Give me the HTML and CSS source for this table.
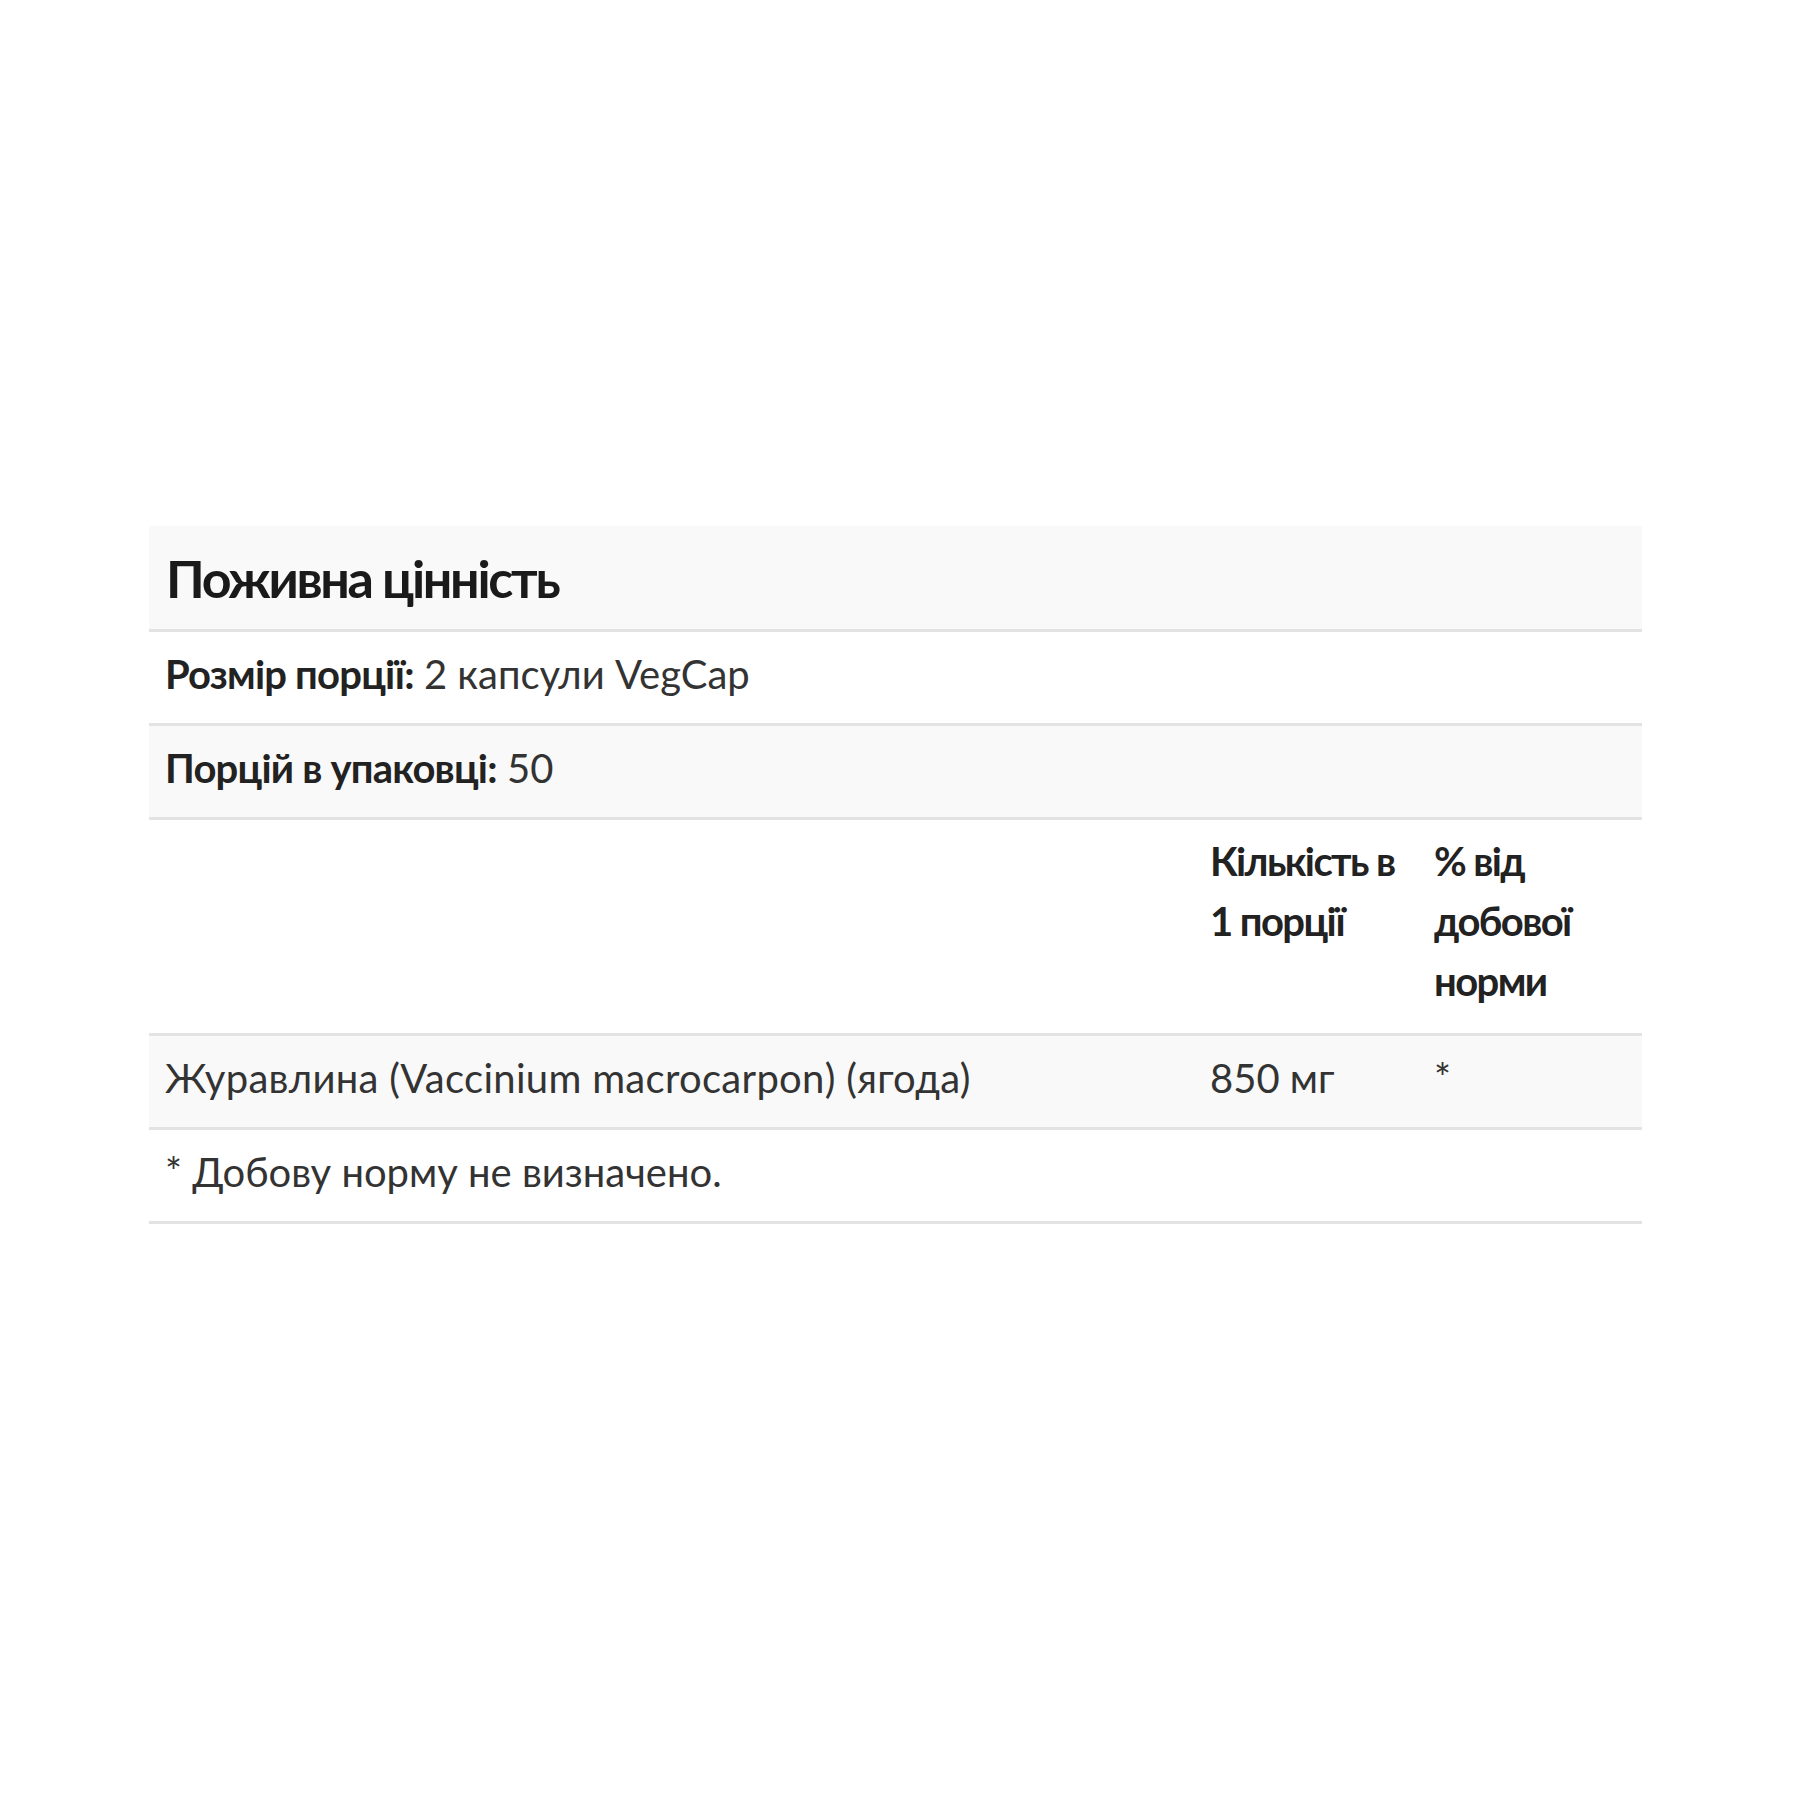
FILE: index.html
```html
<!DOCTYPE html>
<html lang="uk">
<head>
<meta charset="utf-8">
<title>Поживна цінність</title>
<link rel="stylesheet" href="styles.css">
</head>
<body>
<div class="page">
  <table class="facts">
    <colgroup>
      <col class="c-name">
      <col class="c-amount">
      <col class="c-dv">
    </colgroup>
    <thead>
      <tr class="title-row shaded">
        <th colspan="3" class="title">Поживна цінність</th>
      </tr>
    </thead>
    <tbody>
      <tr>
        <td colspan="3"><strong>Розмір порції:</strong> 2 капсули VegCap</td>
      </tr>
      <tr class="shaded">
        <td colspan="3"><strong>Порцій в упаковці:</strong> 50</td>
      </tr>
      <tr class="head-row">
        <th></th>
        <th>Кількість в 1 порції</th>
        <th>% від добової норми</th>
      </tr>
      <tr class="shaded">
        <td class="wide">Журавлина (Vaccinium macrocarpon) (ягода)</td>
        <td>850 мг</td>
        <td>*</td>
      </tr>
      <tr>
        <td colspan="3">* Добову норму не визначено.</td>
      </tr>
    </tbody>
  </table>
</div>
</body>
</html>
```

FILE: styles.css
```css
html, body {
  margin: 0;
  padding: 0;
  background: #ffffff;
}

.page {
  padding: 526px 0 0 149px;
}

.facts {
  width: 1493px;
  border-collapse: collapse;
  table-layout: fixed;
  font-family: Lato, "Noto Sans", sans-serif;
  font-size: 40px;
  line-height: 60px;
  color: #333333;
}

.c-name { width: 1045px; }
.c-amount { width: 224px; }
.c-dv { width: 224px; }

.facts th,
.facts td {
  text-align: left;
  vertical-align: top;
  padding: 12px 16px 19px 16px;
  border-bottom: 3px solid #e3e3e3;
}

.facts th {
  font-weight: 700;
  color: #222222;
  letter-spacing: -1.6px;
}

.facts strong {
  font-weight: 700;
  color: #222222;
  letter-spacing: -0.8px;
}

.facts .wide {
  letter-spacing: 0.3px;
}

.shaded {
  background: #f9f9f9;
}

.facts .title {
  font-size: 52px;
  line-height: 62px;
  padding: 21px 17px 20px 17px;
  color: #1a1a1a;
  letter-spacing: -2.3px;
}

.head-row th {
  padding-top: 11px;
  padding-bottom: 22px;
}
```
